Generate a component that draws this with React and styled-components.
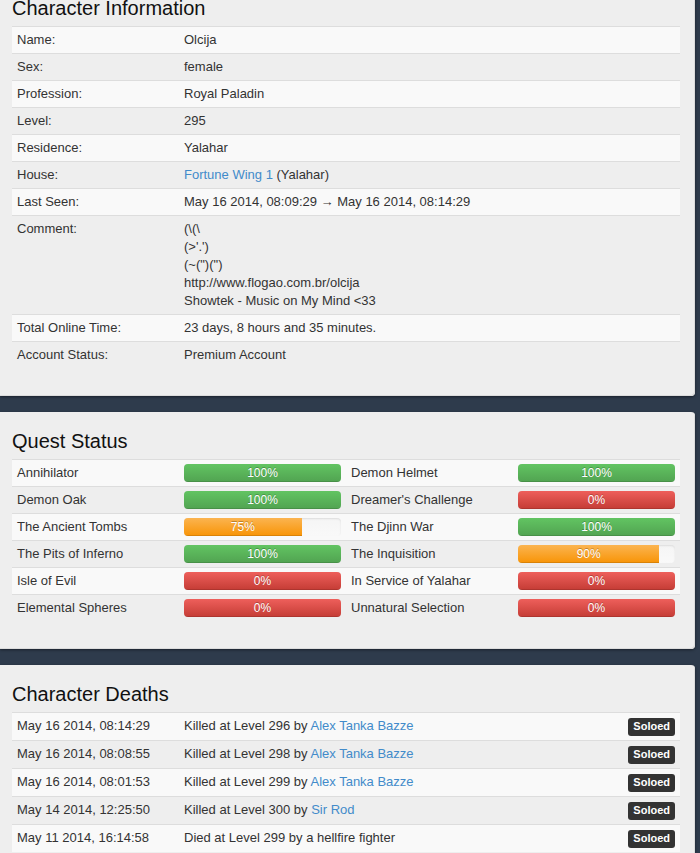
import React from "react";
import styled, { createGlobalStyle, css } from "styled-components";

const Global = createGlobalStyle`
  html, body { margin: 0; padding: 0; }
  body {
    background: #2e3b4c;
    font-family: "Liberation Sans", Arial, sans-serif;
    overflow: hidden;
  }
`;

const Page = styled.div`
  display: flex;
  flex-direction: column;
  gap: 16px;
  margin-top: -21px;
`;

const Panel = styled.section`
  width: 695px;
  box-sizing: border-box;
  background: #eeeeee;
  border-radius: 0 4px 4px 0;
  padding: 18px 15px 28px 12px;
  box-shadow: inset -1px -1px 0 #dcdcdc, 0 1px 3px rgba(0, 0, 0, 0.45);
`;

const Title = styled.h2`
  margin: 0 0 7px;
  font-size: 20px;
  line-height: 22px;
  font-weight: normal;
  color: #111;
`;

const Table = styled.table`
  width: 100%;
  border-collapse: collapse;
  table-layout: fixed;
  font-size: 13px;
  line-height: 18px;
  color: #333;
`;

const Row = styled.tr`
  &:nth-child(odd) { background: #f9f9f9; }
  &:first-child td { border-top: 1px solid #dddddd; }
`;

const Cell = styled.td`
  padding: ${(p) => (p.$tall ? "4px 5px 5px" : "4px 5px")};
  border-top: 1px solid #dddddd;
  vertical-align: top;
  text-align: ${(p) => (p.$right ? "right" : "left")};
  white-space: nowrap;
`;

const Link = styled.a`
  color: #428bca;
  text-decoration: none;
`;

const Track = styled.div`
  height: 18px;
  border-radius: 4px;
  overflow: hidden;
  background: linear-gradient(#f5f5f5, #f9f9f9);
  box-shadow: inset 0 1px 2px rgba(0, 0, 0, 0.1);
`;

const fills = {
  success: css`background: linear-gradient(#62c462, #51a351); box-shadow: inset 0 -1px 0 rgba(0,0,0,0.12);`,
  danger: css`background: linear-gradient(#ee5f5b, #c43c35); box-shadow: inset 0 -1px 0 rgba(0,0,0,0.12);`,
  warning: css`background: linear-gradient(#fbb450, #f89406); box-shadow: inset 0 -1px 0 rgba(0,0,0,0.12);`,
};

const Fill = styled.div`
  height: 100%;
  min-width: 100%;
  box-sizing: border-box;
  color: #fff;
  font-size: 12px;
  line-height: 18px;
  text-align: center;
  text-shadow: 0 -1px 0 rgba(0, 0, 0, 0.25);
  ${(p) => fills[p.$kind]}
  ${(p) => p.$partial && css`min-width: 0;`}
`;

const Badge = styled.span`
  display: inline-block;
  vertical-align: top;
  background: #333333;
  color: #fff;
  font-weight: bold;
  font-size: 11px;
  line-height: 11px;
  padding: 3px 5px 4px;
  border-radius: 3px;
  margin: 1px 0 -1px;
`;

const info = [
  ["Name:", "Olcija"],
  ["Sex:", "female"],
  ["Profession:", "Royal Paladin"],
  ["Level:", "295"],
  ["Residence:", "Yalahar"],
  ["House:", <><Link href="#">Fortune Wing 1</Link> (Yalahar)</>],
  ["Last Seen:", "May 16 2014, 08:09:29 \u2192 May 16 2014, 08:14:29"],
  [
    "Comment:",
    <>
      (\(\<br />
      (&gt;'.')<br />
      (~(")(")<br />
      http://www.flogao.com.br/olcija<br />
      Showtek - Music on My Mind &lt;33
    </>,
  ],
  ["Total Online Time:", "23 days, 8 hours and 35 minutes."],
  ["Account Status:", "Premium Account"],
];

const quests = [
  ["Annihilator", 100, "Demon Helmet", 100],
  ["Demon Oak", 100, "Dreamer's Challenge", 0],
  ["The Ancient Tombs", 75, "The Djinn War", 100],
  ["The Pits of Inferno", 100, "The Inquisition", 90],
  ["Isle of Evil", 0, "In Service of Yalahar", 0],
  ["Elemental Spheres", 0, "Unnatural Selection", 0],
];

const deaths = [
  ["May 16 2014, 08:14:29", "Killed at Level 296 by ", "Alex Tanka Bazze"],
  ["May 16 2014, 08:08:55", "Killed at Level 298 by ", "Alex Tanka Bazze"],
  ["May 16 2014, 08:01:53", "Killed at Level 299 by ", "Alex Tanka Bazze"],
  ["May 14 2014, 12:25:50", "Killed at Level 300 by ", "Sir Rod"],
  ["May 11 2014, 16:14:58", "Died at Level 299 by a hellfire fighter", null],
];

function Progress({ value }) {
  const kind = value === 100 ? "success" : value === 0 ? "danger" : "warning";
  const partial = value > 0 && value < 100;
  return (
    <Track>
      <Fill $kind={kind} $partial={partial} style={partial ? { width: `${value}%` } : undefined}>
        {value}%
      </Fill>
    </Track>
  );
}

export default function App() {
  return (
    <>
      <Global />
      <Page>
        <Panel>
          <Title>Character Information</Title>
          <Table>
            <colgroup>
              <col style={{ width: "25%" }} />
              <col />
            </colgroup>
            <tbody>
              {info.map(([k, v], i) => (
                <Row key={i}>
                  <Cell>{k}</Cell>
                  <Cell>{v}</Cell>
                </Row>
              ))}
            </tbody>
          </Table>
        </Panel>
        <Panel>
          <Title>Quest Status</Title>
          <Table>
            <tbody>
              {quests.map(([a, av, b, bv], i) => (
                <Row key={i}>
                  <Cell>{a}</Cell>
                  <Cell><Progress value={av} /></Cell>
                  <Cell>{b}</Cell>
                  <Cell><Progress value={bv} /></Cell>
                </Row>
              ))}
            </tbody>
          </Table>
        </Panel>
        <Panel>
          <Title>Character Deaths</Title>
          <Table>
            <colgroup>
              <col style={{ width: "25%" }} />
              <col />
              <col style={{ width: "70px" }} />
            </colgroup>
            <tbody>
              {deaths.map(([d, txt, who], i) => (
                <Row key={i}>
                  <Cell $tall>{d}</Cell>
                  <Cell $tall>
                    {txt}
                    {who && <Link href="#">{who}</Link>}
                  </Cell>
                  <Cell $tall $right><Badge>Soloed</Badge></Cell>
                </Row>
              ))}
            </tbody>
          </Table>
        </Panel>
      </Page>
    </>
  );
}
